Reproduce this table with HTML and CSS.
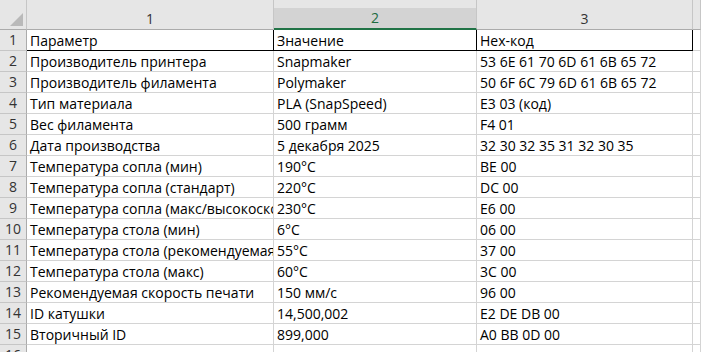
FILE: index.html
```html
<!DOCTYPE html>
<html lang="ru">
<head>
<meta charset="utf-8">
<link rel="stylesheet" href="styles.css">
</head>
<body>
<div class="sheet">
  <div class="hdr corner"><span class="tri"></span></div>
  <div class="hdr col">1</div>
  <div class="hdr col sel">2</div>
  <div class="hdr col">3</div>
  <div class="hdr col"></div>

  <div class="rh">1</div><div class="c top">Параметр</div><div class="c top">Значение</div><div class="c top">Hex-код</div><div class="c x"></div>
  <div class="rh">2</div><div class="c">Производитель принтера</div><div class="c">Snapmaker</div><div class="c">53 6E 61 70 6D 61 6B 65 72</div><div class="c x"></div>
  <div class="rh">3</div><div class="c">Производитель филамента</div><div class="c">Polymaker</div><div class="c">50 6F 6C 79 6D 61 6B 65 72</div><div class="c x"></div>
  <div class="rh">4</div><div class="c">Тип материала</div><div class="c">PLA (SnapSpeed)</div><div class="c">E3 03 (код)</div><div class="c x"></div>
  <div class="rh">5</div><div class="c">Вес филамента</div><div class="c">500 грамм</div><div class="c">F4 01</div><div class="c x"></div>
  <div class="rh">6</div><div class="c">Дата производства</div><div class="c">5 декабря 2025</div><div class="c">32 30 32 35 31 32 30 35</div><div class="c x"></div>
  <div class="rh">7</div><div class="c">Температура сопла (мин)</div><div class="c">190°C</div><div class="c">BE 00</div><div class="c x"></div>
  <div class="rh">8</div><div class="c">Температура сопла (стандарт)</div><div class="c">220°C</div><div class="c">DC 00</div><div class="c x"></div>
  <div class="rh">9</div><div class="c">Температура сопла (макс/высокоскоростная)</div><div class="c">230°C</div><div class="c">E6 00</div><div class="c x"></div>
  <div class="rh">10</div><div class="c">Температура стола (мин)</div><div class="c">6°C</div><div class="c">06 00</div><div class="c x"></div>
  <div class="rh">11</div><div class="c">Температура стола (рекомендуемая)</div><div class="c">55°C</div><div class="c">37 00</div><div class="c x"></div>
  <div class="rh">12</div><div class="c">Температура стола (макс)</div><div class="c">60°C</div><div class="c">3C 00</div><div class="c x"></div>
  <div class="rh">13</div><div class="c">Рекомендуемая скорость печати</div><div class="c">150 мм/с</div><div class="c">96 00</div><div class="c x"></div>
  <div class="rh">14</div><div class="c">ID катушки</div><div class="c">14,500,002</div><div class="c">E2 DE DB 00</div><div class="c x"></div>
  <div class="rh">15</div><div class="c">Вторичный ID</div><div class="c">899,000</div><div class="c">A0 BB 0D 00</div><div class="c x"></div>
  <div class="rh">16</div><div class="c"></div><div class="c"></div><div class="c"></div><div class="c x"></div>
</div>
</body>
</html>
```

FILE: styles.css
```css
* { box-sizing: border-box; }
html, body { margin: 0; padding: 0; background: #fff; }
body { width: 701px; height: 352px; overflow: hidden; }
.sheet {
  display: grid;
  grid-template-columns: 27px 247px 203px 216px 1fr;
  grid-template-rows: 30px repeat(16, 21px);
  font-family: "Open Sans", "Liberation Sans", sans-serif;
  font-size: 14px;
  color: #000;
}
.hdr {
  background: #e6e6e6;
  border-bottom: 1px solid #ababab;
  border-right: 1px solid #c6c6c6;
  display: flex;
  align-items: center;
  justify-content: center;
  padding-top: 7px;
  color: #333;
  position: relative;
}
.hdr.sel {
  background: linear-gradient(#e6e6e6 0 8px, #d3d3d3 8px);
  border-bottom: 2px solid #217346;
  color: #1e6b41;
}
.corner { border-right: 1px solid #c6c6c6; }
.tri {
  position: absolute;
  right: 3px;
  bottom: 3px;
  width: 0;
  height: 0;
  border-left: 13px solid transparent;
  border-bottom: 13px solid #b9b9b9;
}
.rh {
  background: #e6e6e6;
  border-right: 1px solid #ababab;
  border-bottom: 1px solid #c6c6c6;
  color: #333;
  display: flex;
  align-items: flex-end;
  justify-content: center;
  padding-bottom: 1px;
  line-height: 19px;
}
.c {
  border-right: 1px solid #d4d4d4;
  border-bottom: 1px solid #d4d4d4;
  white-space: nowrap;
  overflow: hidden;
  padding: 0 0 0 3px;
  display: flex;
  align-items: flex-end;
  line-height: 19px;
}
.c.top {
  border-right-color: #000;
  border-bottom-color: #000;
}
```
